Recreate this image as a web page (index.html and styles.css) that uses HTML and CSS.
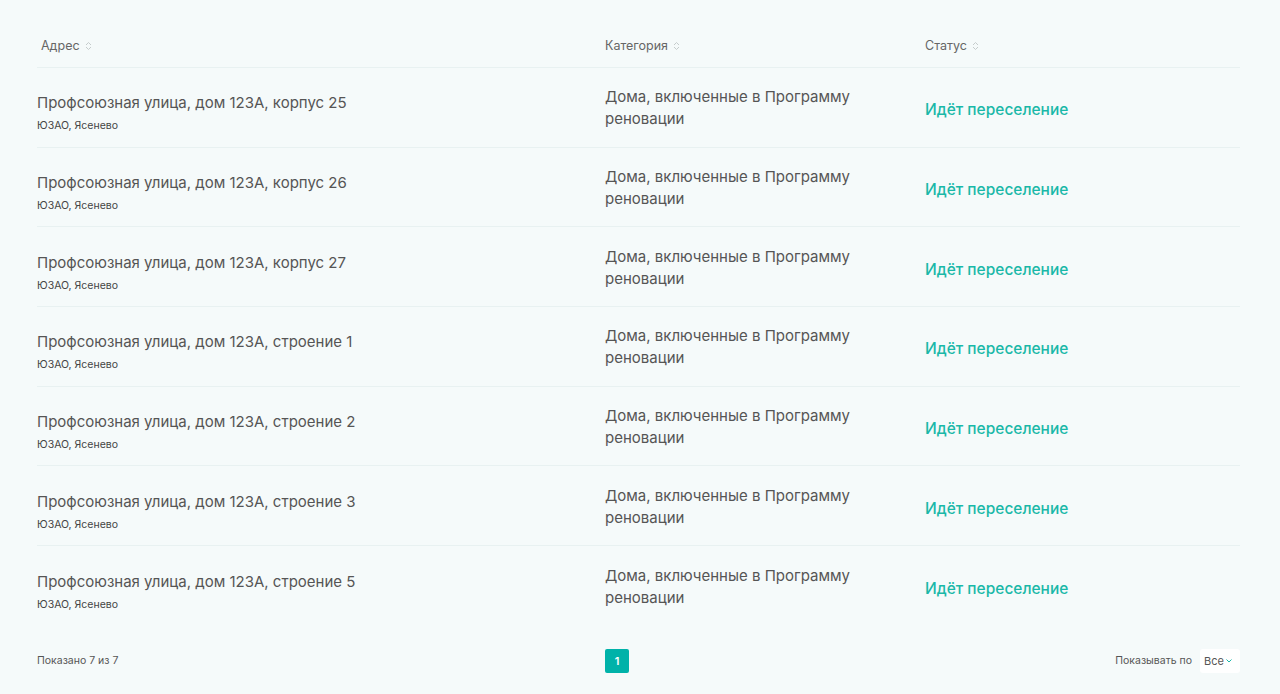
FILE: index.html
```html
<!DOCTYPE html>
<html lang="ru">
<head>
<meta charset="utf-8">
<link rel="stylesheet" href="styles.css">
</head>
<body>
<div class="page">
  <div class="table">
    <div class="head">
      <div class="th c-addr">Адрес <span class="sort"><svg width="7" height="10" viewBox="0 0 7 10"><path d="M1 4 L3.5 1.5 L6 4 M1 6 L3.5 8.5 L6 6" fill="none" stroke="#c5cccc" stroke-width="1"/></svg></span></div>
      <div class="th c-cat">Категория <span class="sort"><svg width="7" height="10" viewBox="0 0 7 10"><path d="M1 4 L3.5 1.5 L6 4 M1 6 L3.5 8.5 L6 6" fill="none" stroke="#c5cccc" stroke-width="1"/></svg></span></div>
      <div class="th c-stat">Статус <span class="sort"><svg width="7" height="10" viewBox="0 0 7 10"><path d="M1 4 L3.5 1.5 L6 4 M1 6 L3.5 8.5 L6 6" fill="none" stroke="#c5cccc" stroke-width="1"/></svg></span></div>
    </div>
    <div class="row">
      <div class="c-addr addr"><div class="title">Профсоюзная улица, дом 123А, корпус 25</div><div class="sub">ЮЗАО, Ясенево</div></div>
      <div class="c-cat cat">Дома, включенные в Программу реновации</div>
      <div class="c-stat stat">Идёт переселение</div>
    </div>
    <div class="row">
      <div class="c-addr addr"><div class="title">Профсоюзная улица, дом 123А, корпус 26</div><div class="sub">ЮЗАО, Ясенево</div></div>
      <div class="c-cat cat">Дома, включенные в Программу реновации</div>
      <div class="c-stat stat">Идёт переселение</div>
    </div>
    <div class="row">
      <div class="c-addr addr"><div class="title">Профсоюзная улица, дом 123А, корпус 27</div><div class="sub">ЮЗАО, Ясенево</div></div>
      <div class="c-cat cat">Дома, включенные в Программу реновации</div>
      <div class="c-stat stat">Идёт переселение</div>
    </div>
    <div class="row">
      <div class="c-addr addr"><div class="title">Профсоюзная улица, дом 123А, строение 1</div><div class="sub">ЮЗАО, Ясенево</div></div>
      <div class="c-cat cat">Дома, включенные в Программу реновации</div>
      <div class="c-stat stat">Идёт переселение</div>
    </div>
    <div class="row">
      <div class="c-addr addr"><div class="title">Профсоюзная улица, дом 123А, строение 2</div><div class="sub">ЮЗАО, Ясенево</div></div>
      <div class="c-cat cat">Дома, включенные в Программу реновации</div>
      <div class="c-stat stat">Идёт переселение</div>
    </div>
    <div class="row">
      <div class="c-addr addr"><div class="title">Профсоюзная улица, дом 123А, строение 3</div><div class="sub">ЮЗАО, Ясенево</div></div>
      <div class="c-cat cat">Дома, включенные в Программу реновации</div>
      <div class="c-stat stat">Идёт переселение</div>
    </div>
    <div class="row last">
      <div class="c-addr addr"><div class="title">Профсоюзная улица, дом 123А, строение 5</div><div class="sub">ЮЗАО, Ясенево</div></div>
      <div class="c-cat cat">Дома, включенные в Программу реновации</div>
      <div class="c-stat stat">Идёт переселение</div>
    </div>
  </div>
  <div class="footer">
    <div class="shown">Показано 7 из 7</div>
    <div class="pager"><span class="pg active">1</span></div>
    <div class="per">Показывать по <span class="select">Все<svg width="6" height="4" viewBox="0 0 6 4"><path d="M0.5 0.5 L3 3 L5.5 0.5" fill="none" stroke="#1ab8a8" stroke-width="1"/></svg></span></div>
  </div>
</div>
</body>
</html>
```
FILE: styles.css
```css
html, body {
  margin: 0;
  padding: 0;
  background: #f5fafa;
}
body {
  font-family: Inter, "Noto Sans", sans-serif;
  color: #555;
}
.page {
  width: 1203px;
  margin-left: 37px;
}
.table {
  display: flex;
  flex-direction: column;
}
.head, .row {
  display: grid;
  grid-template-columns: 568px 320px 1fr;
  border-bottom: 1px solid #e8f1f1;
}
.head {
  height: 68px;
  padding-top: 38px;
  box-sizing: border-box;
  align-items: start;
}
.th {
  font-size: 12.5px;
  color: #666;
  display: flex;
  align-items: center;
  gap: 5px;
}
.th.c-addr { padding-left: 4px; }
.sort { display: inline-flex; }
.row {
  height: 79.7px;
  box-sizing: border-box;
  align-items: center;
}
.row.last { border-bottom: none; }
.addr {
  padding-top: 10px;
}
.title {
  font-size: 15px;
  color: #555;
  line-height: 24px;
}
.sub {
  font-size: 10.5px;
  color: #444;
  margin-top: 4px;
  line-height: 14px;
}
.cat {
  font-size: 15px;
  line-height: 22px;
  color: #555;
  width: 260px;
  padding-top: 2px;
}
.stat {
  font-size: 15.5px;
  font-weight: 500;
  color: #1ab8a8;
  padding-top: 5px;
}
.footer {
  display: grid;
  grid-template-columns: 568px 320px 1fr;
  align-items: center;
  height: 68px;
  padding-top: 2px;
  box-sizing: border-box;
}
.shown {
  font-size: 10.5px;
  color: #555;
}
.pg.active {
  display: inline-flex;
  align-items: center;
  justify-content: center;
  width: 24px;
  height: 24px;
  border-radius: 2px;
  background: #00b2a9;
  color: #fff;
  font-size: 11px;
  font-weight: 600;
}
.per {
  justify-self: end;
  font-size: 10.5px;
  color: #555;
  display: flex;
  align-items: center;
  gap: 8px;
}
.select {
  background: #fff;
  border-radius: 3px;
  height: 24px;
  width: 40px;
  box-sizing: border-box;
  padding-left: 4px;
  display: inline-flex;
  align-items: center;
  gap: 2px;
  font-size: 11px;
  color: #555;
}
```
